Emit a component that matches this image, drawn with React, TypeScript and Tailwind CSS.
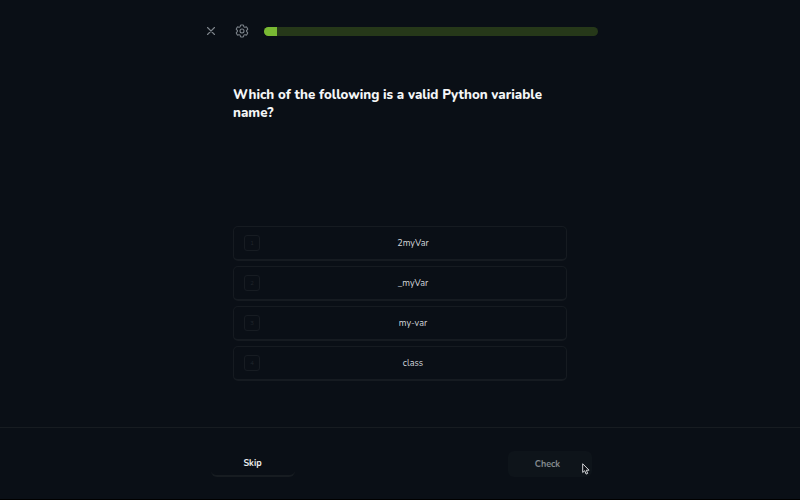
import React from "react";

const answers = ["2myVar", "_myVar", "my-var", "class"];

function CloseIcon() {
  return (
    <svg className="h-[10px] w-[10px]" viewBox="0 0 10 10" fill="none" stroke="currentColor" strokeWidth="1.1" strokeLinecap="round">
      <path d="M1.5 1.5 8.5 8.5M8.5 1.5 1.5 8.5" />
    </svg>
  );
}

function GearIcon() {
  return (
    <svg className="h-4 w-4" viewBox="0 0 24 24" fill="none" stroke="currentColor" strokeWidth="1.6" strokeLinecap="round" strokeLinejoin="round">
      <path d="M9.594 3.94c.09-.542.56-.94 1.11-.94h2.593c.55 0 1.02.398 1.11.94l.213 1.281c.063.374.313.686.645.87.074.04.147.083.22.127.325.196.72.257 1.075.124l1.217-.456a1.125 1.125 0 0 1 1.37.49l1.296 2.247a1.125 1.125 0 0 1-.26 1.431l-1.003.827c-.293.241-.438.613-.43.992a7.723 7.723 0 0 1 0 .255c-.008.378.137.75.43.991l1.004.827c.424.35.534.955.26 1.43l-1.298 2.247a1.125 1.125 0 0 1-1.369.491l-1.217-.456c-.355-.133-.75-.072-1.076.124a6.47 6.47 0 0 1-.22.128c-.331.183-.581.495-.644.869l-.213 1.281c-.09.543-.56.94-1.11.94h-2.594c-.55 0-1.019-.398-1.11-.94l-.213-1.281c-.062-.374-.312-.686-.644-.87a6.52 6.52 0 0 1-.22-.127c-.325-.196-.72-.257-1.076-.124l-1.217.456a1.125 1.125 0 0 1-1.369-.49l-1.297-2.247a1.125 1.125 0 0 1 .26-1.431l1.004-.827c.292-.24.437-.613.43-.991a6.932 6.932 0 0 1 0-.255c.007-.38-.138-.751-.43-.992l-1.004-.827a1.125 1.125 0 0 1-.26-1.43l1.297-2.247a1.125 1.125 0 0 1 1.37-.491l1.216.456c.356.133.751.072 1.076-.124.072-.044.146-.086.22-.128.332-.183.582-.495.644-.869l.214-1.28Z" />
      <circle cx="12" cy="12" r="3" />
    </svg>
  );
}

function Cursor() {
  return (
    <svg className="absolute left-[582px] top-[463px] h-3 w-2" viewBox="0 0 8 12" fill="#080b10" stroke="#d5d7da" strokeWidth="1" strokeLinejoin="round">
      <path d="M.7.8v8.7l2-1.8 1.4 3.4 1.6-.7-1.4-3.2h2.8Z" />
    </svg>
  );
}

export default function App() {
  return (
    <div className="relative flex h-[500px] w-[800px] flex-col overflow-hidden border-b border-black bg-[#0a0f16] font-['Nunito','Lato',sans-serif] text-[#d5d9dd]">
      <header className="flex h-[62px] items-center pl-[206px] text-[#7e858c]">
        <button aria-label="Close"><CloseIcon /></button>
        <button aria-label="Settings" className="ml-[18px]"><GearIcon /></button>
        <div className="ml-[14px] h-[9px] w-[334px] overflow-hidden rounded-full bg-[#263819]">
          <div className="h-full w-[13px] bg-[#79b933]" />
        </div>
      </header>
      <main className="flex h-[365px] flex-col pl-[233px]">
        <h1 className="mt-6 h-[140px] w-[334px] text-[13.3px] leading-[18px] font-extrabold text-[#f4f6f7]">
          Which of the following is a valid Python variable name?
        </h1>
        <div className="flex w-[334px] flex-col gap-[5px]">
          {answers.map((answer, i) => (
            <button key={answer} className="flex h-[35px] items-center rounded-[5px] border border-b-2 border-[#161b21] pr-0 pl-[10px] text-[9px]">
              <span className="flex h-4 w-4 items-center justify-center rounded-[3px] border border-[#171c22] text-[6px] text-[#20262c]">{i + 1}</span>
              <span className="flex-1 pt-px text-center">{answer}</span>
            </button>
          ))}
        </div>
      </main>
      <footer className="flex grow items-start justify-between border-t border-[#171c21] pr-[208px] pl-[211px] pt-[23px] text-[9px] font-bold">
        <button className="h-[26px] w-[84px] rounded-[6px] border-b-2 border-[#171c21] pt-[2px] pr-px text-[#eef0f1]">Skip</button>
        <button className="h-[26px] w-[84px] rounded-[6px] bg-[#0e141a] pt-px pr-[5px] text-[#858a8f]">Check</button>
      </footer>
      <Cursor />
    </div>
  );
}
